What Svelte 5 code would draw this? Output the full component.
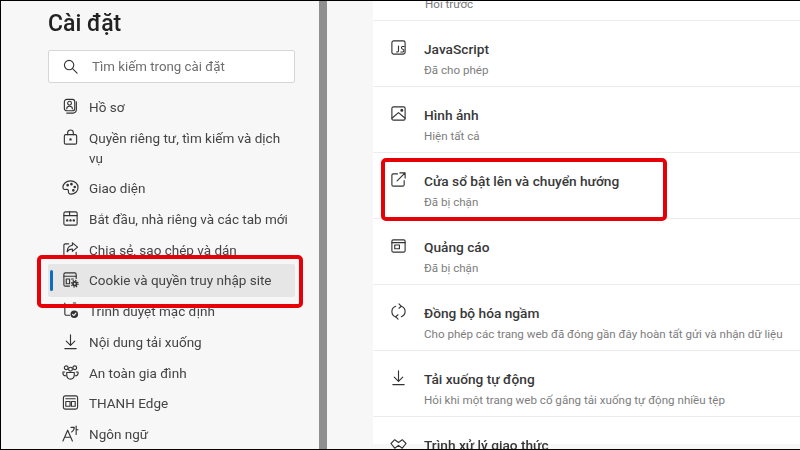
<script lang="ts">
    const icons: Record<string, string> = {
        profile: '<rect x="2.5" y="1.5" width="11" height="12" rx="2.5"/><circle cx="8" cy="5.5" r="2"/><path d="M5 11.5c0-2 1-2.8 3-2.8s3 .8 3 2.8"/><path d="M15.2 4v8.5a3.500 3.500 0 0 1-3.500 3.500H5"/>',
        lock: '<rect x="2.5" y="6" width="13" height="10" rx="1.5"/><path d="M6 6V4a3 3 0 0 1 6 0v2"/><circle cx="9" cy="11" r=".7" fill="currentColor"/>',
        palette: '<path d="M9 2C4.500 2 1 5 1 9c0 2 2 2.300 3.500 2 1.500-.3 2.500.5 2.300 2-.2 1.700.8 3 2.700 3 4 0 7.500-3 7.500-7S13.500 2 9 2z"/><circle cx="6" cy="6.500" r=".8" fill="currentColor"/><circle cx="10" cy="5.500" r=".8" fill="currentColor"/><circle cx="13.500" cy="8.500" r=".8" fill="currentColor"/><circle cx="12" cy="12" r=".8" fill="currentColor"/>',
        start: '<rect x="2" y="2" width="14" height="14" rx="1.500"/><path d="M2 6h6V2M8 6h8"/><circle cx="5.500" cy="11" r=".7" fill="currentColor"/><circle cx="9" cy="11" r=".7" fill="currentColor"/><circle cx="12.500" cy="11" r=".7" fill="currentColor"/>',
        share: '<path d="M7 3H3.500A1.500 1.500 0 0 0 2 4.500v10A1.500 1.500 0 0 0 3.500 16h10a1.500 1.500 0 0 0 1.500-1.500V12"/><path d="M11 2l5.500 4.500L11 11V8.500c-3 0-4.500 1-5.500 3 0-4 2-6.500 5.500-7z"/>',
        cookie: '<path d="M8 16H3.500A1.500 1.500 0 0 1 2 14.500v-11A1.500 1.500 0 0 1 3.500 2h10A1.500 1.500 0 0 1 15 3.500V8"/><path d="M2 5.500h13M4.500 8.500h3.500v5H4.500zM10 8.500h2"/><circle cx="13.500" cy="13.500" r="2.800" fill="currentColor" stroke="none"/><circle cx="13.500" cy="13.500" r="3.500" stroke-width="1.300" stroke-dasharray="1.400 1.350" stroke-linecap="butt"/><circle cx="13.500" cy="13.500" r="1" fill="#e6e6e6" stroke="none"/>',
        browser: '<path d="M3 1v11.500A1.500 1.500 0 0 0 4.500 14H8"/><path d="M12 1h2.500"/><circle cx="13" cy="13" r="4" fill="currentColor" stroke="none"/><path d="M11.200 13l1.300 1.300 2.200-2.500" stroke="#f7f7f7"/>',
        download: '<path d="M9 2v11M4.500 8.500L9 13l4.500-4.500M3 16.500h12"/>',
        family: '<circle cx="4.500" cy="4" r="2"/><circle cx="13.500" cy="4" r="2"/><circle cx="9" cy="5.500" r="2"/><path d="M2.800 8.500H1v1.300c0 1.500 1.200 2.700 3 2.700M15.200 8.500H17v1.300c0 1.500-1.200 2.700-3 2.700"/><path d="M5 9h8v2.500C13 14.500 11.300 16 9 16s-4-1.500-4-4.500z"/>',
        edge: '<rect x="1.500" y="2" width="15" height="14" rx="2"/><path d="M4 5h10M4 8h4.500v5H4zM10 8h4v5h-4z"/>',
        language: '<path d="M1 17L6 5.500l5 11.500M2.800 13h6.400"/><path d="M9.500 2.500h3.500c0 2.200-1 3.800-2.800 4.800M15 1v9M15 5h2"/>',
        js: '<rect x="2" y="2" width="14" height="14" rx="2"/><path d="M9 7.500v5c0 1-1 1.500-2 1.200M15 8h-2c-1.200 0-1.200 2.500.5 2.800s1.500 3 0 3H11.500"/>',
        image: '<rect x="2" y="2" width="14" height="14" rx="1.500"/><path d="M2 14l7-6 7 6"/><circle cx="12.500" cy="5.500" r="1" fill="currentColor"/>',
        popup: '<path d="M8 3H3.500A1.500 1.500 0 0 0 2 4.500v10A1.500 1.500 0 0 0 3.500 16h10a1.500 1.500 0 0 0 1.500-1.500V10"/><path d="M7.500 10.500L16 2M10.500 2H16v5.500"/>',
        ads: '<rect x="2" y="3" width="14" height="13" rx="1.500"/><path d="M2 6h14M5 8.500h5v4H5z"/>',
        sync: '<path d="M6 3.500C3.500 4.500 2 6.500 2 9c0 2.500 1.500 4.800 4 5.800M12 14.500c2.500-1 4-3.200 4-5.500 0-2.500-1.500-4.500-4-5.500"/><path d="M9.500 1L12 3.500 9.500 5.500M8.500 17L6 14.500l2.500-2"/>',
        protocol: '<path d="M1 9l4-4 4 3 4-3 4 4-4 5-4-3-4 3z"/>',
    };

    const navItems = [
        { icon: 'profile', label: 'Hồ sơ' },
        { icon: 'lock', label: 'Quyền riêng tư, tìm kiếm và dịch vụ' },
        { icon: 'palette', label: 'Giao diện' },
        { icon: 'start', label: 'Bắt đầu, nhà riêng và các tab mới' },
        { icon: 'share', label: 'Chia sẻ, sao chép và dán' },
        { icon: 'cookie', label: 'Cookie và quyền truy nhập site', active: true },
        { icon: 'browser', label: 'Trình duyệt mặc định' },
        { icon: 'download', label: 'Nội dung tải xuống' },
        { icon: 'family', label: 'An toàn gia đình' },
        { icon: 'edge', label: 'THANH Edge' },
        { icon: 'language', label: 'Ngôn ngữ' },
    ];

    const permissions = [
        { icon: 'js', title: 'JavaScript', sub: 'Đã cho phép' },
        { icon: 'image', title: 'Hình ảnh', sub: 'Hiện tất cả' },
        { icon: 'popup', title: 'Cửa sổ bật lên và chuyển hướng', sub: 'Đã bị chặn' },
        { icon: 'ads', title: 'Quảng cáo', sub: 'Đã bị chặn' },
        { icon: 'sync', title: 'Đồng bộ hóa ngầm', sub: 'Cho phép các trang web đã đóng gần đây hoàn tất gửi và nhận dữ liệu' },
        { icon: 'download', title: 'Tải xuống tự động', sub: 'Hỏi khi một trang web cố gắng tải xuống tự động nhiều tệp' },
        { icon: 'protocol', title: 'Trình xử lý giao thức', sub: '' },
    ];
</script>

{#snippet icon(name: string)}
    <svg class="icon" viewBox="0 0 18 18" width="17" height="17">
        <g fill="none" stroke="currentColor" stroke-width="1.2" stroke-linecap="round" stroke-linejoin="round">
            {@html icons[name]}
        </g>
    </svg>
{/snippet}

<div class="frame">
    <aside class="sidebar">
        <h1>Cài đặt</h1>
        <div class="search">
            <svg viewBox="0 0 16 16" width="15" height="15" fill="none" stroke="#333" stroke-width="1.2" stroke-linecap="round">
                <circle cx="6.500" cy="6.500" r="5"/>
                <path d="M10.200 10.200L15 15"/>
            </svg>
            <span>Tìm kiếm trong cài đặt</span>
        </div>
        <nav>
            {#each navItems as item}
                <div class="nav-item" class:active={item.active}>
                    {@render icon(item.icon)}
                    <span>{item.label}</span>
                </div>
            {/each}
        </nav>
        <div class="highlight nav-highlight"></div>
    </aside>

    <div class="splitter"></div>

    <main class="content">
        <section class="panel">
            <div class="scrolled-row">Hỏi trước</div>
            {#each permissions as row}
                <div class="row">
                    {@render icon(row.icon)}
                    <div class="row-text">
                        <div class="row-title">{row.title}</div>
                        <div class="row-sub">{row.sub}</div>
                    </div>
                </div>
            {/each}
        </section>
        <div class="highlight row-highlight"></div>
    </main>
</div>

<style>
    :global(body) {
        margin: 0;
        background: #f7f7f7;
    }

    .frame {
        position: relative;
        display: flex;
        box-sizing: border-box;
        width: 800px;
        height: 450px;
        overflow: hidden;
        border: solid #000;
        border-width: 1px 0 1px 1px;
        background: #f7f7f7;
        font-family: Roboto, "Noto Sans", sans-serif;
        color: #2b2b2b;
    }

    /* the reference is a slightly soft, upscaled capture */
    .sidebar,
    .content {
        filter: blur(0.3px);
    }

    .sidebar {
        width: 318px;
        flex-shrink: 0;
        box-sizing: border-box;
        padding: 0 24px 0 47px;
    }

    h1 {
        margin: 8px 0 0;
        font-size: 23px;
        line-height: 30px;
        font-weight: 500;
        color: #222;
    }

    .search {
        display: flex;
        align-items: center;
        gap: 14px;
        box-sizing: border-box;
        height: 33px;
        margin-top: 11px;
        padding-left: 14px;
        background: #fff;
        border: 1px solid #d6d6d6;
        border-radius: 2px;
        font-size: 13.3px;
        color: #6e6e6e;
    }

    nav {
        margin-top: 9px;
    }

    .nav-item {
        display: flex;
        align-items: flex-start;
        gap: 10px;
        padding: 5px 5px 5.7px 14px;
        font-size: 13.5px;
        line-height: 20px;
        color: #444;
    }

    .nav-item .icon {
        flex-shrink: 0;
        margin-top: 1px;
        color: #333;
    }

    .nav-item.active {
        position: relative;
        margin: -1px 0;
        padding-top: 6px;
        padding-bottom: 6.7px;
        background: #e6e6e6;
        border-radius: 2px;
    }

    .nav-item.active::before {
        content: "";
        position: absolute;
        left: 2px;
        top: 6px;
        bottom: 6px;
        width: 3px;
        border-radius: 2px;
        background: #0f6cbd;
    }

    .splitter {
        width: 8px;
        flex-shrink: 0;
        background: #8f8f8f;
    }

    .content {
        flex: 1;
        padding-left: 46px;
    }

    .panel {
        background: #fff;
        height: 100%;
    }

    .scrolled-row {
        height: 25px;
        box-sizing: border-box;
        margin-top: -5px;
        padding-left: 52px;
        font-size: 11.6px;
        line-height: 16px;
        color: #777;
        border-bottom: 1px solid #ececec;
    }

    .row {
        display: flex;
        align-items: flex-start;
        gap: 17px;
        box-sizing: border-box;
        height: 66px;
        padding: 18px 0 0 17px;
        border-bottom: 1px solid #ececec;
    }

    .row .icon {
        flex-shrink: 0;
        margin-top: 0;
        color: #333;
    }

    .row-title {
        font-size: 13.7px;
        line-height: 20px;
        font-weight: 500;
        color: #383838;
    }

    .row-sub {
        margin-top: 3px;
        font-size: 11.6px;
        line-height: 16px;
        color: #7d7d7d;
    }

    .highlight {
        position: absolute;
        box-sizing: border-box;
        border: 4px solid #e60008;
        border-radius: 5px;
        pointer-events: none;
    }

    .nav-highlight {
        left: 36px;
        top: 254px;
        width: 266px;
        height: 53px;
    }

    /* offsets are from .content, which the filter makes the containing block */
    .row-highlight {
        left: 54px;
        top: 157px;
        width: 286px;
        height: 63px;
    }
</style>
